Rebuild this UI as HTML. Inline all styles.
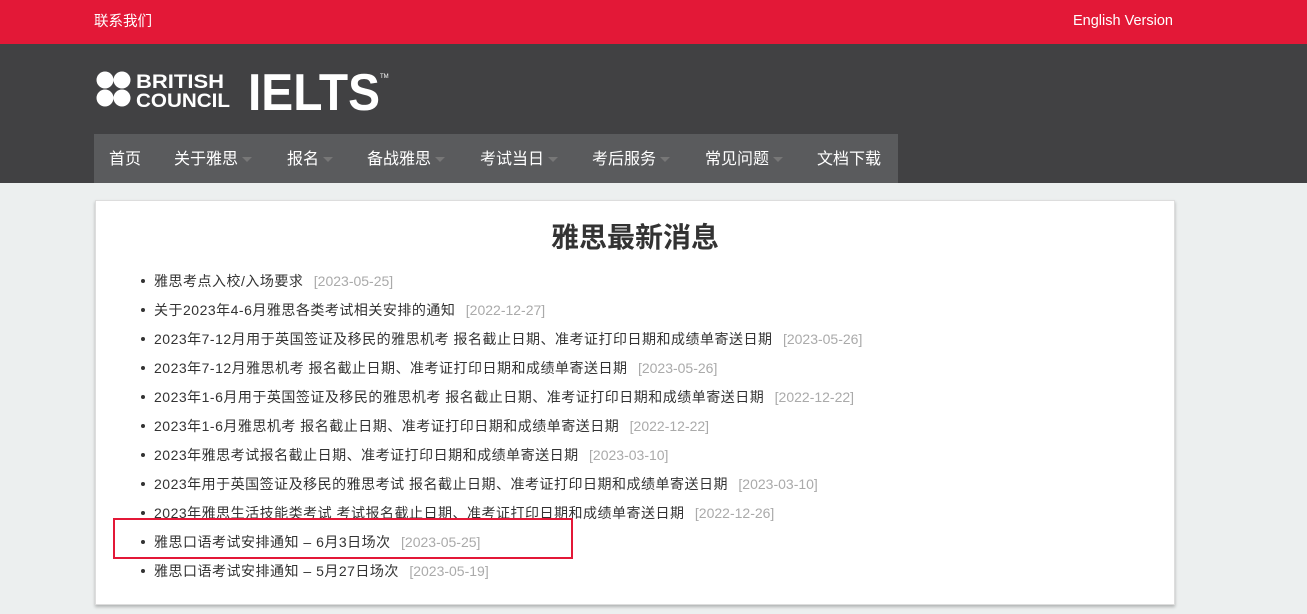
<!DOCTYPE html>
<html><head><meta charset="utf-8"><style>
*{margin:0;padding:0;box-sizing:border-box}
body{width:1307px;height:614px;overflow:hidden;background:#ecefef;font-family:"Liberation Sans","Noto Sans CJK SC",sans-serif;position:relative}
.top{position:absolute;left:0;top:0;width:1307px;height:44px;background:#e31837;color:#fff;font-size:14.5px}
.top span{position:absolute}
.hdr{position:absolute;left:0;top:44px;width:1307px;height:139px;background:#414143}
.nav{position:absolute;left:94px;top:134px;width:804px;height:49px;background:#5a5b5d}
.nav span{position:absolute;top:11px;color:#fff;font-size:16px;white-space:nowrap}
.nav i{display:inline-block;width:0;height:0;border-left:5px solid transparent;border-right:5px solid transparent;border-top:5px solid #777;margin-left:4px;vertical-align:middle}
.card{position:absolute;left:95px;top:200px;width:1080px;height:405px;background:#fff;border:1px solid #ddd;box-shadow:0 2px 3px rgba(0,0,0,.25)}
h1{position:absolute;left:0;width:100%;top:15px;text-align:center;font-size:28px;font-weight:bold;color:#333}
ul{position:absolute;left:58px;top:70px;list-style:none}
li{height:29px;font-size:14px;letter-spacing:0.5px;color:#333;white-space:nowrap;position:relative}
li:before{content:"";position:absolute;left:-13px;top:8px;width:4px;height:4px;border-radius:50%;background:#333}
li b{font-weight:normal;color:#aaa;margin-left:6px;letter-spacing:0}
.box{position:absolute;left:113px;top:518px;width:460px;height:41px;border:2px solid #e31837}
</style></head><body>
<div class="top"><span style="left:94px;top:10px">联系我们</span><span style="left:1073px;top:13px">English Version</span></div>
<div class="hdr">
<svg style="position:absolute;left:96px;top:26px" width="300" height="42">
<circle cx="9" cy="10" r="8.5" fill="#fff"/><circle cx="26" cy="10" r="8.5" fill="#fff"/><circle cx="9" cy="28" r="8.5" fill="#fff"/><circle cx="26" cy="28" r="8.5" fill="#fff"/>
<text x="40" y="18" fill="#fff" font-family="Liberation Sans" font-weight="bold" font-size="19" textLength="88" lengthAdjust="spacingAndGlyphs">BRITISH</text>
<text x="40" y="37" fill="#fff" font-family="Liberation Sans" font-weight="bold" font-size="19" textLength="94" lengthAdjust="spacingAndGlyphs">COUNCIL</text>
<text x="152" y="40" fill="#fff" font-family="Liberation Sans" font-weight="bold" font-size="52" textLength="132" lengthAdjust="spacingAndGlyphs">IELTS</text>
<text x="284" y="8" fill="#fff" font-family="Liberation Sans" font-size="6">TM</text>
</svg></div>
<div class="nav">
<span style="left:15px">首页</span>
<span style="left:80px">关于雅思<i></i></span>
<span style="left:193px">报名<i></i></span>
<span style="left:273px">备战雅思<i></i></span>
<span style="left:386px">考试当日<i></i></span>
<span style="left:498px">考后服务<i></i></span>
<span style="left:611px">常见问题<i></i></span>
<span style="left:723px">文档下载</span>
</div>
<div class="card"><h1>雅思最新消息</h1>
<ul>
<li>雅思考点入校/入场要求 <b>[2023-05-25]</b></li>
<li>关于2023年4-6月雅思各类考试相关安排的通知 <b>[2022-12-27]</b></li>
<li>2023年7-12月用于英国签证及移民的雅思机考 报名截止日期、准考证打印日期和成绩单寄送日期 <b>[2023-05-26]</b></li>
<li>2023年7-12月雅思机考 报名截止日期、准考证打印日期和成绩单寄送日期 <b>[2023-05-26]</b></li>
<li>2023年1-6月用于英国签证及移民的雅思机考 报名截止日期、准考证打印日期和成绩单寄送日期 <b>[2022-12-22]</b></li>
<li>2023年1-6月雅思机考 报名截止日期、准考证打印日期和成绩单寄送日期 <b>[2022-12-22]</b></li>
<li>2023年雅思考试报名截止日期、准考证打印日期和成绩单寄送日期 <b>[2023-03-10]</b></li>
<li>2023年用于英国签证及移民的雅思考试 报名截止日期、准考证打印日期和成绩单寄送日期 <b>[2023-03-10]</b></li>
<li>2023年雅思生活技能类考试 考试报名截止日期、准考证打印日期和成绩单寄送日期 <b>[2022-12-26]</b></li>
<li>雅思口语考试安排通知 – 6月3日场次 <b>[2023-05-25]</b></li>
<li>雅思口语考试安排通知 – 5月27日场次 <b>[2023-05-19]</b></li>
</ul></div>
<div class="box"></div>
</body></html>
